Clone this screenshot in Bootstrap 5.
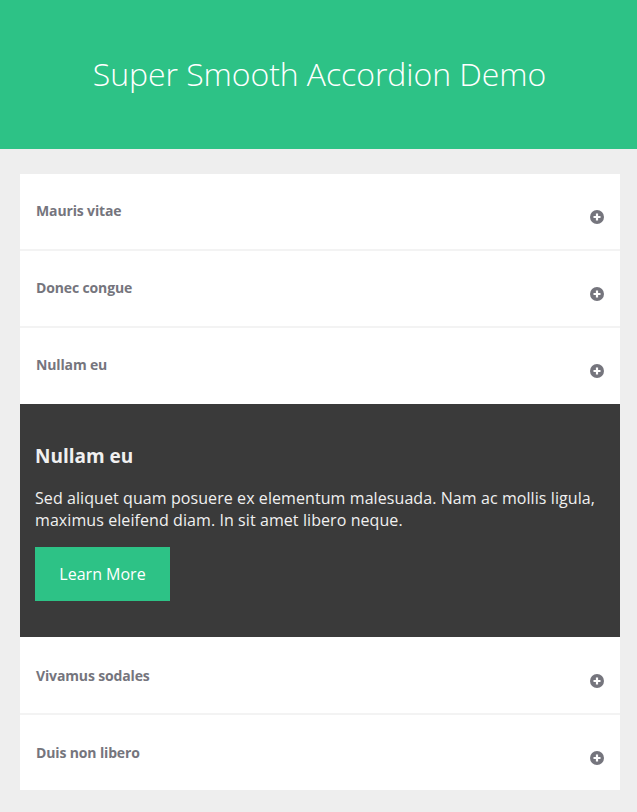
<!DOCTYPE html>
<html lang="en">
<head>
  <meta charset="UTF-8">
  <meta name="viewport" content="width=device-width, initial-scale=1.0">
  <title>Super Smooth Accordion Demo</title>
  <link rel="stylesheet" href="https://cdn.jsdelivr.net/npm/bootstrap@5.3.0/dist/css/bootstrap.min.css">
  <style>
    body { background: #eee; font-family: "Open Sans", sans-serif; color: #fff; }
    .demo-header { background: #2dc286; height: 149px; padding: 0 0 2px 2px; }
    .demo-header h1 { font-size: 32px; font-weight: 300; line-height: 1; letter-spacing: -.07px; }
    .demo-wrap { padding: 25px 17px 0 20px; }
    .acc-list { width: 600px; }
    .acc-row { height: 77px; padding: 26px 16px 0; background: #fff; color: #75757d; font-size: 14px; font-weight: 700; letter-spacing: -.14px; border-bottom: 2px solid #f3f3f3; }
    .acc-row svg { margin-top: 10px; }
    .acc-row.before-panel { height: 76px; border-bottom: 0; }
    .acc-row.after-panel { height: 78px; padding-top: 28px; }
    .acc-row.after-panel svg { margin-top: 9px; }
    .acc-row.final-row { height: 75px; padding-top: 27px; border-bottom: 0; }
    .acc-row.final-row svg { margin-top: 9px; }
    .acc-panel { background: #3a3a3a; height: 233px; padding: 40px 15px 0; color: #f0f0f0; }
    .acc-panel h2 { font-size: 19px; font-weight: 700; line-height: 24px; margin-bottom: 19px; }
    .acc-panel p { font-size: 16px; line-height: 22px; letter-spacing: .08px; margin-bottom: 16px; }
    .btn-learn { background: #2dc286; color: #fff; border: 0; border-radius: 0; width: 135px; height: 54px; font-size: 16px; padding: 0; line-height: 54px; }
  </style>
</head>
<body>

<header class="demo-header d-flex align-items-center justify-content-center">
  <h1 class="m-0">Super Smooth Accordion Demo</h1>
</header>

<div class="demo-wrap">
  <div class="acc-list">
    <div class="acc-row d-flex align-items-start justify-content-between">
      <span>Mauris vitae</span>
      <svg width="14" height="14" viewBox="0 0 14 14"><circle cx="7" cy="7" r="7" fill="#75757d"/><path d="M7 3.5v7M3.5 7h7" stroke="#fff" stroke-width="2.2"/></svg>
    </div>
    <div class="acc-row d-flex align-items-start justify-content-between">
      <span>Donec congue</span>
      <svg width="14" height="14" viewBox="0 0 14 14"><circle cx="7" cy="7" r="7" fill="#75757d"/><path d="M7 3.5v7M3.5 7h7" stroke="#fff" stroke-width="2.2"/></svg>
    </div>
    <div class="acc-row before-panel d-flex align-items-start justify-content-between">
      <span>Nullam eu</span>
      <svg width="14" height="14" viewBox="0 0 14 14"><circle cx="7" cy="7" r="7" fill="#75757d"/><path d="M7 3.5v7M3.5 7h7" stroke="#fff" stroke-width="2.2"/></svg>
    </div>
    <div class="acc-panel">
      <h2>Nullam eu</h2>
      <p>Sed aliquet quam posuere ex elementum malesuada. Nam ac mollis ligula, maximus eleifend diam. In sit amet libero neque.</p>
      <a href="#" class="btn btn-learn">Learn More</a>
    </div>
    <div class="acc-row after-panel d-flex align-items-start justify-content-between">
      <span>Vivamus sodales</span>
      <svg width="14" height="14" viewBox="0 0 14 14"><circle cx="7" cy="7" r="7" fill="#75757d"/><path d="M7 3.5v7M3.5 7h7" stroke="#fff" stroke-width="2.2"/></svg>
    </div>
    <div class="acc-row final-row d-flex align-items-start justify-content-between">
      <span>Duis non libero</span>
      <svg width="14" height="14" viewBox="0 0 14 14"><circle cx="7" cy="7" r="7" fill="#75757d"/><path d="M7 3.5v7M3.5 7h7" stroke="#fff" stroke-width="2.2"/></svg>
    </div>
  </div>
</div>

<script src="https://cdn.jsdelivr.net/npm/bootstrap@5.3.0/dist/js/bootstrap.bundle.min.js"></script>
</body>
</html>
